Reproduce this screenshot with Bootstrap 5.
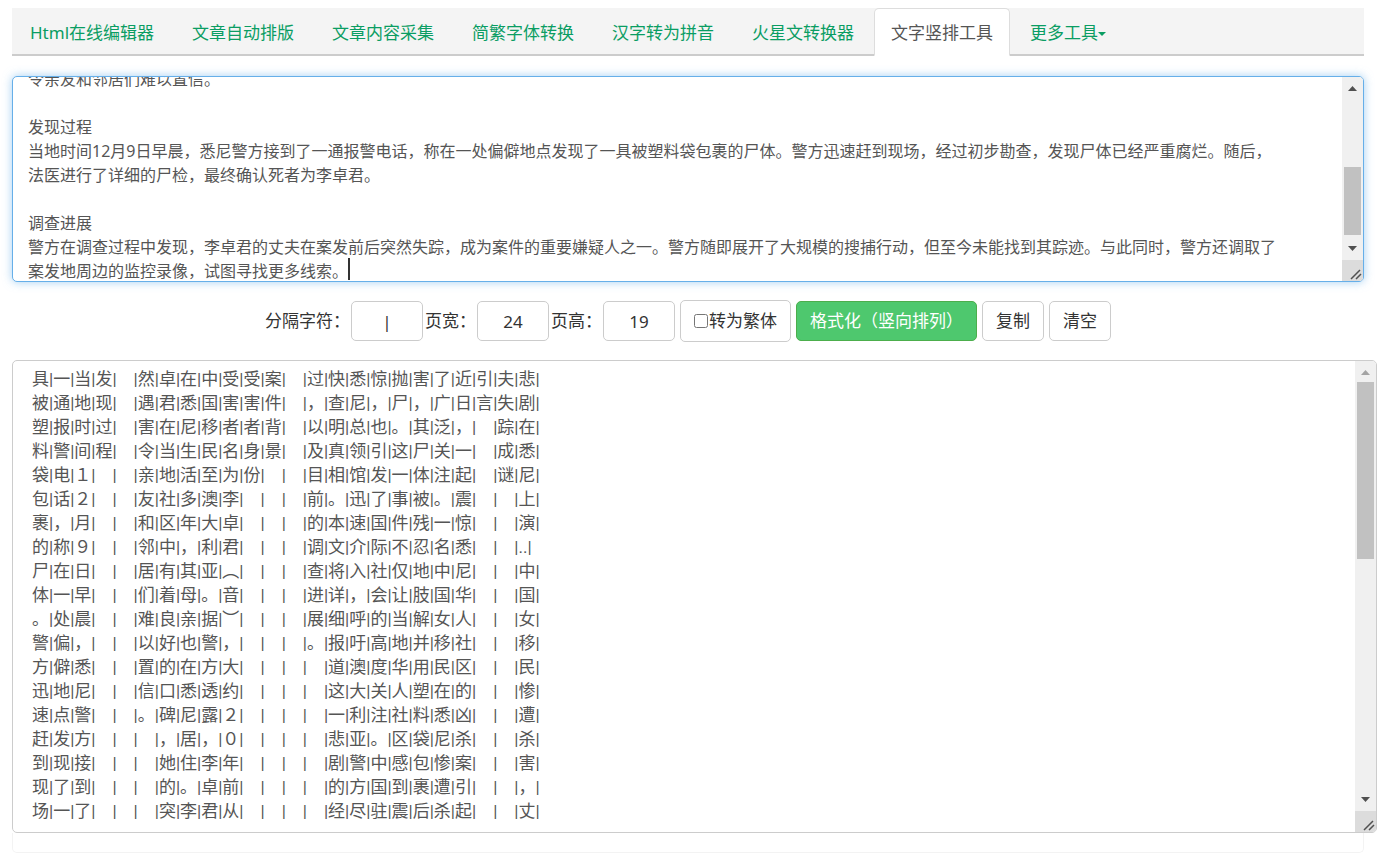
<!DOCTYPE html>
<html lang="zh-CN">
<head>
<meta charset="utf-8">
<meta name="viewport" content="width=device-width, initial-scale=1">
<title>文字竖排工具</title>
<link href="https://cdn.jsdelivr.net/npm/bootstrap@5.3.0/dist/css/bootstrap.min.css" rel="stylesheet">
<style>
  body { font: 17px/24px "Noto Sans", "Noto Sans CJK SC", sans-serif; color: #333; overflow-x: hidden; }
  .page { padding: 8px 16px 0 12px; }
  .tool-tabs { --bs-nav-link-color: #0a9d63; --bs-nav-link-hover-color: #087a4d; --bs-nav-tabs-link-active-color: #555;
    background: #f4f4f4; border-bottom: 2px solid #ccc; gap: 2px; margin-bottom: 20px; }
  .tool-tabs .nav-link { padding: 12px 17px 10px; margin-bottom: -2px; border-radius: 5px 5px 0 0; line-height: 24px; }
  .tool-tabs .nav-link.active { border-color: #ddd #ddd #fff; padding-left: 16px; padding-right: 16px; }
  .tool-tabs .dropdown-toggle::after { margin-left: 0; vertical-align: 3px; border-width: 4px 4px 0; }

  .pane { border: 1px solid #ccc; border-radius: 5px; overflow: hidden; background: #fff; }
  .pane textarea { border: 0; outline: 0; resize: none; overflow: hidden; color: #555; background: transparent; display: block; white-space: pre; line-height: 24px; }
  .source { border-color: #66afe9; box-shadow: 0 0 10px rgba(102, 175, 233, .6); }
  .source textarea { height: 204px; padding: 0 0 10px 15px; font-size: 16px; caret-color: transparent; }
  .caret { left: 15px; bottom: 1px; margin-left: 20em; width: 2px; height: 22px; background: #333; font-size: 16px; }
  .result { margin-right: -13px; }
  .result textarea { height: 471px; padding: 6px 0 0 19px; font-family: Roboto, "Noto Sans CJK SC", sans-serif; }

  .scroll-track { width: 21px; background: #f0f0f0; }
  .scroll-track svg { display: block; width: 21px; height: 21px; flex: none; }
  .scroll-thumb { width: 17px; background: #c1c1c1; margin: 0 auto; }
  .scroll-track .grip { background: #dcdcdc; }

  .controls { padding: 18px 0; gap: 5px; }
  .field { gap: 1px; }
  .controls .form-control, .controls .btn { font-size: 17px; line-height: 24px; color: #333; border: 1px solid #ccc; border-radius: 5px; height: 40px; padding: 7px 13px; }
  .controls .form-control { width: 72px; text-align: center; padding: 7px 4px; }
  .field + .field { margin-left: -3px; }
  .controls .btn-format { background: #4ec86e; border-color: #4cae4c; color: #fff; }
  .check-box { border: 1px solid #ccc; border-radius: 5px; height: 42px; padding: 0 13px; gap: 1px; }
  .check-box input { width: 14px; height: 14px; margin: 0; }
  .foot-line { border: 1px solid #f3f3f3; border-top: 0; border-radius: 0 0 5px 5px; height: 20px; }
</style>
</head>
<body>
<main class="page">
  <ul class="nav nav-tabs tool-tabs">
    <li class="nav-item"><a class="nav-link" href="#">Html在线编辑器</a></li>
    <li class="nav-item"><a class="nav-link" href="#">文章自动排版</a></li>
    <li class="nav-item"><a class="nav-link" href="#">文章内容采集</a></li>
    <li class="nav-item"><a class="nav-link" href="#">简繁字体转换</a></li>
    <li class="nav-item"><a class="nav-link" href="#">汉字转为拼音</a></li>
    <li class="nav-item"><a class="nav-link" href="#">火星文转换器</a></li>
    <li class="nav-item"><a class="nav-link active" href="#" aria-current="page">文字竖排工具</a></li>
    <li class="nav-item dropdown"><a class="nav-link dropdown-toggle" href="#" data-bs-toggle="dropdown">更多工具</a></li>
  </ul>

  <div class="pane source d-flex position-relative">
    <textarea id="source" class="flex-grow-1" aria-label="原文" spellcheck="false">令亲友和邻居们难以置信。

发现过程
当地时间12月9日早晨，悉尼警方接到了一通报警电话，称在一处偏僻地点发现了一具被塑料袋包裹的尸体。警方迅速赶到现场，经过初步勘查，发现尸体已经严重腐烂。随后，
法医进行了详细的尸检，最终确认死者为李卓君。

调查进展
警方在调查过程中发现，李卓君的丈夫在案发前后突然失踪，成为案件的重要嫌疑人之一。警方随即展开了大规模的搜捕行动，但至今未能找到其踪迹。与此同时，警方还调取了
案发地周边的监控录像，试图寻找更多线索。</textarea>
    <span class="caret position-absolute"></span>
    <div class="scroll-track d-flex flex-column" aria-hidden="true">
      <svg viewBox="0 0 21 21"><path d="M6 14l4.500-5 4.500 5z" fill="#505050"/></svg>
      <div class="flex-grow-1 d-flex flex-column justify-content-end pb-1"><div class="scroll-thumb" style="height:50%"></div></div>
      <svg viewBox="0 0 21 21"><path d="M6 7l4.500 5 4.500-5z" fill="#505050"/></svg>
      <svg class="grip" viewBox="0 0 21 21"><path d="M9 19l9-9M14 19l5-5" stroke="#505050" stroke-width="1.500"/></svg>
    </div>
  </div>

  <form class="controls d-flex flex-wrap justify-content-center align-items-center">
    <div class="field d-flex align-items-center"><label for="sep">分隔字符：</label><input id="sep" class="form-control" type="text" value="|"></div>
    <div class="field d-flex align-items-center"><label for="cols">页宽：</label><input id="cols" class="form-control" type="text" value="24"></div>
    <div class="field d-flex align-items-center"><label for="rows">页高：</label><input id="rows" class="form-control" type="text" value="19"></div>
    <label class="check-box d-flex align-items-center" for="trad"><input id="trad" type="checkbox">转为繁体</label>
    <button type="button" class="btn btn-format">格式化（竖向排列）</button>
    <button type="button" class="btn">复制</button>
    <button type="button" class="btn">清空</button>
  </form>

  <div class="pane result d-flex">
    <textarea id="result" class="flex-grow-1" aria-label="竖排结果" spellcheck="false">具|一|当|发|　|然|卓|在|中|受|受|案|　|过|快|悉|惊|抛|害|了|近|引|夫|悲|
被|通|地|现|　|遇|君|悉|国|害|害|件|　|，|查|尼|，|尸|，|广|日|言|失|剧|
塑|报|时|过|　|害|在|尼|移|者|者|背|　|以|明|总|也|。|其|泛|，|　|踪|在|
料|警|间|程|　|令|当|生|民|名|身|景|　|及|真|领|引|这|尸|关|一|　|成|悉|
袋|电|１|　|　|亲|地|活|至|为|份|　|　|目|相|馆|发|一|体|注|起|　|谜|尼|
包|话|２|　|　|友|社|多|澳|李|　|　|　|前|。|迅|了|事|被|。|震|　|　|上|
裹|，|月|　|　|和|区|年|大|卓|　|　|　|的|本|速|国|件|残|一|惊|　|　|演|
的|称|９|　|　|邻|中|，|利|君|　|　|　|调|文|介|际|不|忍|名|悉|　|　|..|
尸|在|日|　|　|居|有|其|亚|︵|　|　|　|查|将|入|社|仅|地|中|尼|　|　|中|
体|一|早|　|　|们|着|母|。|音|　|　|　|进|详|，|会|让|肢|国|华|　|　|国|
。|处|晨|　|　|难|良|亲|据|︶|　|　|　|展|细|呼|的|当|解|女|人|　|　|女|
警|偏|，|　|　|以|好|也|警|，|　|　|　|。|报|吁|高|地|并|移|社|　|　|移|
方|僻|悉|　|　|置|的|在|方|大|　|　|　|　|道|澳|度|华|用|民|区|　|　|民|
迅|地|尼|　|　|信|口|悉|透|约|　|　|　|　|这|大|关|人|塑|在|的|　|　|惨|
速|点|警|　|　|。|碑|尼|露|２|　|　|　|　|一|利|注|社|料|悉|凶|　|　|遭|
赶|发|方|　|　|　|，|居|，|０|　|　|　|　|悲|亚|。|区|袋|尼|杀|　|　|杀|
到|现|接|　|　|　|她|住|李|年|　|　|　|　|剧|警|中|感|包|惨|案|　|　|害|
现|了|到|　|　|　|的|。|卓|前|　|　|　|　|的|方|国|到|裹|遭|引|　|　|，|
场|一|了|　|　|　|突|李|君|从|　|　|　|　|经|尽|驻|震|后|杀|起|　|　|丈|</textarea>
    <div class="scroll-track d-flex flex-column" aria-hidden="true">
      <svg viewBox="0 0 21 21"><path d="M6 14l4.500-5 4.500 5z" fill="#a3a3a3"/></svg>
      <div class="flex-grow-1"><div class="scroll-thumb" style="height:43.500%"></div></div>
      <svg viewBox="0 0 21 21"><path d="M6 7l4.500 5 4.500-5z" fill="#505050"/></svg>
      <svg class="grip" viewBox="0 0 21 21"><path d="M9 19l9-9M14 19l5-5" stroke="#505050" stroke-width="1.500"/></svg>
    </div>
  </div>
  <div class="foot-line"></div>
</main>
<script src="https://cdn.jsdelivr.net/npm/bootstrap@5.3.0/dist/js/bootstrap.bundle.min.js"></script>
<script>document.getElementById("source").scrollTop = 10;</script>
</body>
</html>
